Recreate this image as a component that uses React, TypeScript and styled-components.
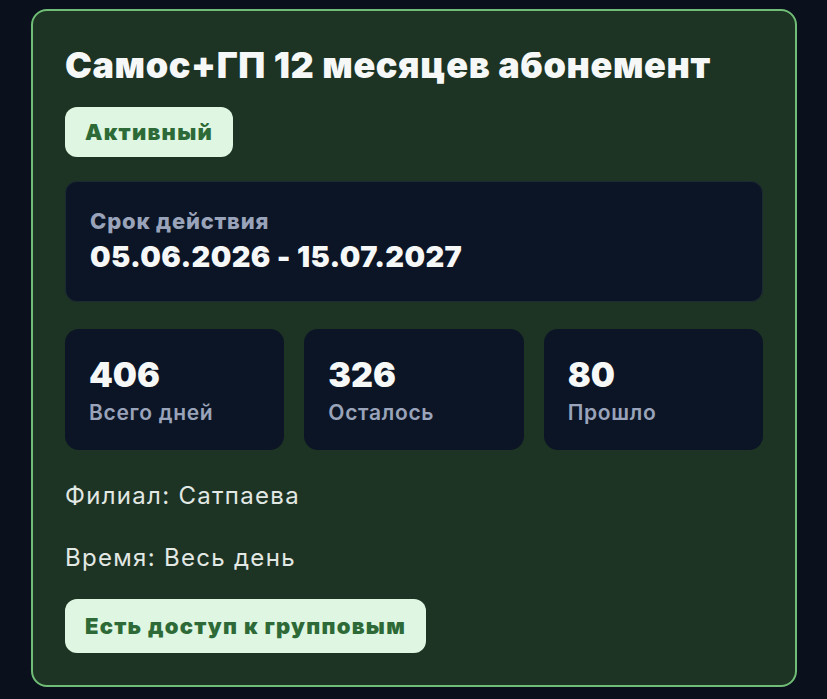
import styled, { createGlobalStyle } from 'styled-components';
import { ReactElement } from 'react';

const GlobalStyle = createGlobalStyle`
  html,
  body {
    margin: 0;
    padding: 0;
    background: #0a101c;
  }

  body {
    font-family: Inter, 'Noto Sans', 'Liberation Sans', sans-serif;
    -webkit-font-smoothing: antialiased;
  }
`;

const Page = styled.main`
  min-height: 699px;
  padding: 9px 31px 12px 31px;
  box-sizing: border-box;
`;

const Card = styled.section`
  display: flex;
  flex-direction: column;
  align-items: flex-start;
  width: 766px;
  box-sizing: border-box;
  padding: 32px 32px 32px;
  background: #1d3323;
  border: 2px solid #6fbd76;
  border-radius: 16px;
`;

const Title = styled.h1`
  margin: 0;
  font-size: 36px;
  line-height: 44px;
  font-weight: 900;
  letter-spacing: 0.6px;
  color: #f6f8f7;
`;

const Pill = styled.span<{ $tall?: boolean }>`
  display: inline-flex;
  align-items: center;
  height: ${({ $tall }) => ($tall ? '54px' : '50px')};
  padding: 0 20px;
  box-sizing: border-box;
  background: #dff7e2;
  border-radius: 12px;
  font-size: 22px;
  font-weight: 900;
  letter-spacing: 1.25px;
  color: #2e6a37;
`;

const StatusPill = styled(Pill)`
  margin-top: 20px;
`;

const Panel = styled.div`
  background: #0c1526;
  border: 1px solid #1c2a34;
  border-radius: 12px;
  box-sizing: border-box;
`;

const Period = styled(Panel)`
  align-self: stretch;
  margin-top: 24px;
  padding: 26px 24px 27px;
`;

const Caption = styled.div`
  font-size: 22px;
  line-height: 26px;
  font-weight: 800;
  letter-spacing: 0.8px;
  color: #99a3b9;
`;

const Dates = styled.div`
  margin-top: 6px;
  font-size: 29px;
  line-height: 34px;
  font-weight: 900;
  letter-spacing: 0.35px;
  color: #f6f8f7;
`;

const Stats = styled.div`
  align-self: stretch;
  display: grid;
  grid-template-columns: repeat(3, 1fr);
  gap: 20px;
  margin-top: 27px;
`;

const Stat = styled(Panel)`
  height: 121px;
  padding: 24px 23px;
  border-color: transparent;
  border-radius: 14px;
`;

const StatValue = styled.div`
  font-size: 34px;
  line-height: 42px;
  font-weight: 900;
  color: #f6f8f7;
`;

const StatLabel = styled.div`
  margin-top: 4px;
  font-size: 21px;
  line-height: 26px;
  font-weight: 600;
  letter-spacing: 0.7px;
  color: #99a3b9;
`;

const Info = styled.p`
  margin: 0;
  font-size: 24px;
  line-height: 28px;
  font-weight: 400;
  letter-spacing: 1.3px;
  color: #e2e8e4;
`;

const Branch = styled(Info)`
  margin-top: 32px;
`;

const Schedule = styled(Info)`
  margin-top: 34px;
`;

const AccessPill = styled(Pill)`
  margin-top: 27px;
`;

const stats = [
  { value: 406, label: 'Всего дней' },
  { value: 326, label: 'Осталось' },
  { value: 80, label: 'Прошло' },
];

export default function App(): ReactElement {
  return (
    <>
      <GlobalStyle />
      <Page>
        <Card>
          <Title>Самос+ГП 12 месяцев абонемент</Title>
          <StatusPill>Активный</StatusPill>

          <Period>
            <Caption>Срок действия</Caption>
            <Dates>05.06.2026 - 15.07.2027</Dates>
          </Period>

          <Stats>
            {stats.map((s) => (
              <Stat key={s.label}>
                <StatValue>{s.value}</StatValue>
                <StatLabel>{s.label}</StatLabel>
              </Stat>
            ))}
          </Stats>

          <Branch>Филиал: Сатпаева</Branch>
          <Schedule>Время: Весь день</Schedule>
          <AccessPill $tall>Есть доступ к групповым</AccessPill>
        </Card>
      </Page>
    </>
  );
}
